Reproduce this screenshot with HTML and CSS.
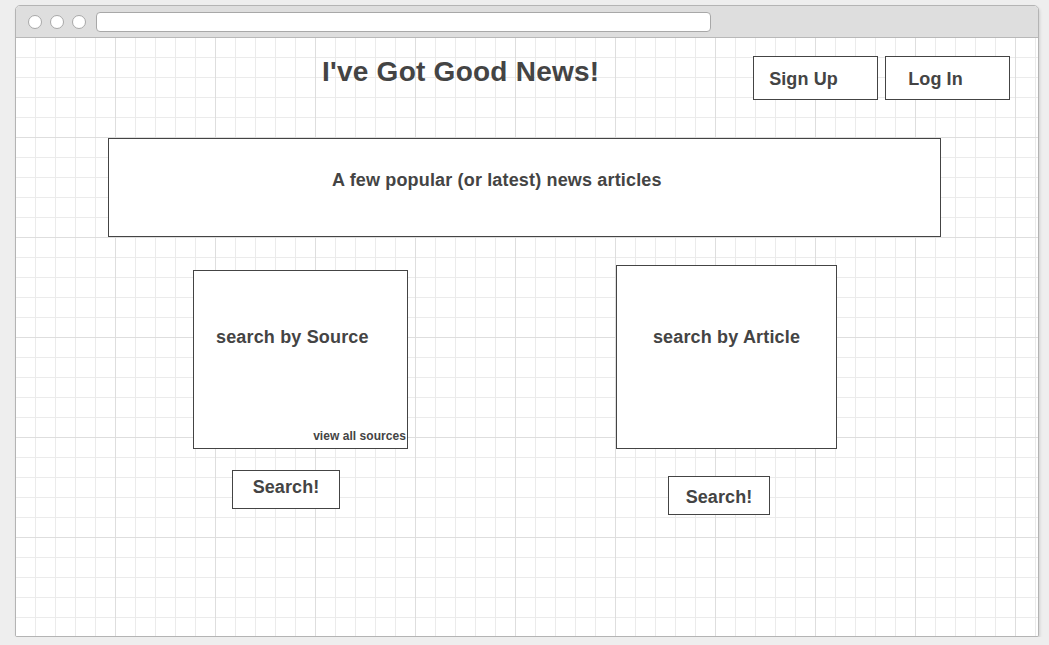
FILE: index.html
```html
<!DOCTYPE html>
<html lang="en">
<head>
<meta charset="utf-8">
<title>I've Got Good News!</title>
<link rel="stylesheet" href="styles.css">
</head>
<body>
<div class="window">
  <div class="titlebar">
    <span class="dot"></span>
    <span class="dot"></span>
    <span class="dot"></span>
    <span class="address"></span>
  </div>
  <div class="canvas">
    <header class="header">
      <h1 class="title">I've Got Good News!</h1>
      <div class="auth">
        <button class="auth-btn">Sign Up</button>
        <button class="auth-btn">Log In</button>
      </div>
    </header>
    <section class="featured">A few popular (or latest) news articles</section>
    <div class="search-row">
      <div class="col col-source">
        <div class="panel panel-source">
          <div class="panel-title">search by Source</div>
          <div class="view-all">view all sources</div>
        </div>
        <button class="search-btn search-btn-source">Search!</button>
      </div>
      <div class="col col-article">
        <div class="panel panel-article">
          <div class="panel-title">search by Article</div>
        </div>
        <button class="search-btn search-btn-article">Search!</button>
      </div>
    </div>
  </div>
</div>
</body>
</html>
```
FILE: styles.css
```css
html, body {
  margin: 0;
  padding: 0;
}

body {
  background: #eeeeee;
  font-family: "Liberation Sans", Arial, sans-serif;
  color: #444444;
}

.window {
  margin: 5px 0 0 15px;
  width: 1024px;
  height: 632px;
  box-sizing: border-box;
  border: 1px solid #b4b4b4;
  border-radius: 5px 5px 2px 2px;
  background: #ffffff;
  box-shadow: 1px 2px 3px rgba(0, 0, 0, 0.12);
  display: flex;
  flex-direction: column;
  overflow: hidden;
}

.titlebar {
  flex: none;
  height: 31px;
  border-bottom: 1px solid #b8b8b8;
  background: #dedede;
  display: flex;
  align-items: center;
  gap: 8px;
  padding-left: 12px;
}

.dot {
  width: 14px;
  height: 14px;
  box-sizing: border-box;
  border: 1px solid #a8a8a8;
  border-radius: 50%;
  background: #ffffff;
}

.address {
  margin-left: 2px;
  width: 615px;
  height: 20px;
  box-sizing: border-box;
  border: 1px solid #a8a8a8;
  border-radius: 4px;
  background: #ffffff;
}

.canvas {
  flex: 1;
  background-color: #ffffff;
  background-image:
    linear-gradient(to right, transparent 99px, #dedede 99px, #dedede 100px, transparent 100px),
    linear-gradient(to bottom, transparent 99px, #dedede 99px, #dedede 100px, transparent 100px),
    linear-gradient(to right, transparent 19px, #ebebeb 19px, #ebebeb 20px, transparent 20px),
    linear-gradient(to bottom, transparent 19px, #ebebeb 19px, #ebebeb 20px, transparent 20px);
  background-size: 100px 100px, 100px 100px, 20px 20px, 20px 20px;
}

.header {
  display: flex;
  align-items: flex-start;
  padding: 18px 28px 0 0;
}

.title {
  margin: 0 0 0 306px;
  font-size: 28px;
  line-height: 32px;
  font-weight: bold;
  letter-spacing: 0.25px;
  color: #444444;
}

.auth {
  margin-left: auto;
  display: flex;
  gap: 7px;
}

.auth-btn {
  width: 125px;
  height: 44px;
  box-sizing: border-box;
  border: 1px solid #444444;
  background: #ffffff;
  color: #444444;
  font-family: inherit;
  font-size: 18px;
  font-weight: bold;
  line-height: 40px;
  letter-spacing: 0.1px;
  padding: 2px 24px 0 0;
  text-align: center;
  margin: 0;
}

.featured {
  margin: 38px 0 0 92px;
  width: 833px;
  height: 99px;
  box-sizing: border-box;
  border: 1px solid #444444;
  background: #ffffff;
  padding: 30px 0 0 223px;
  font-size: 18px;
  line-height: 22px;
  font-weight: bold;
  letter-spacing: 0.16px;
}

.search-row {
  display: flex;
  align-items: flex-start;
}

.col {
  display: flex;
  flex-direction: column;
  align-items: flex-start;
}

.col-source {
  margin: 33px 0 0 177px;
}

.col-article {
  margin: 28px 0 0 208px;
}

.panel {
  box-sizing: border-box;
  border: 1px solid #444444;
  background: #ffffff;
  display: flex;
  flex-direction: column;
}

.panel-title {
  font-size: 18px;
  line-height: 22px;
  font-weight: bold;
  letter-spacing: 0.16px;
}

.panel-source {
  width: 215px;
  height: 179px;
  padding: 55px 1px 5px 22px;
}

.panel-article {
  width: 221px;
  height: 184px;
  padding-top: 60px;
  text-align: center;
}

.view-all {
  margin-top: auto;
  align-self: flex-end;
  font-size: 12px;
  line-height: 14px;
  font-weight: bold;
  letter-spacing: 0.05px;
}

.search-btn {
  height: 39px;
  box-sizing: border-box;
  border: 1px solid #444444;
  background: #ffffff;
  color: #444444;
  font-family: inherit;
  font-size: 18px;
  font-weight: bold;
  letter-spacing: 0.1px;
  text-align: center;
  margin: 0;
  padding: 0;
}

.search-btn-source {
  width: 108px;
  margin: 21px 0 0 39px;
  line-height: 32px;
  padding-bottom: 5px;
}

.search-btn-article {
  width: 102px;
  margin: 27px 0 0 52px;
  line-height: 34px;
  padding-top: 3px;
}
```
